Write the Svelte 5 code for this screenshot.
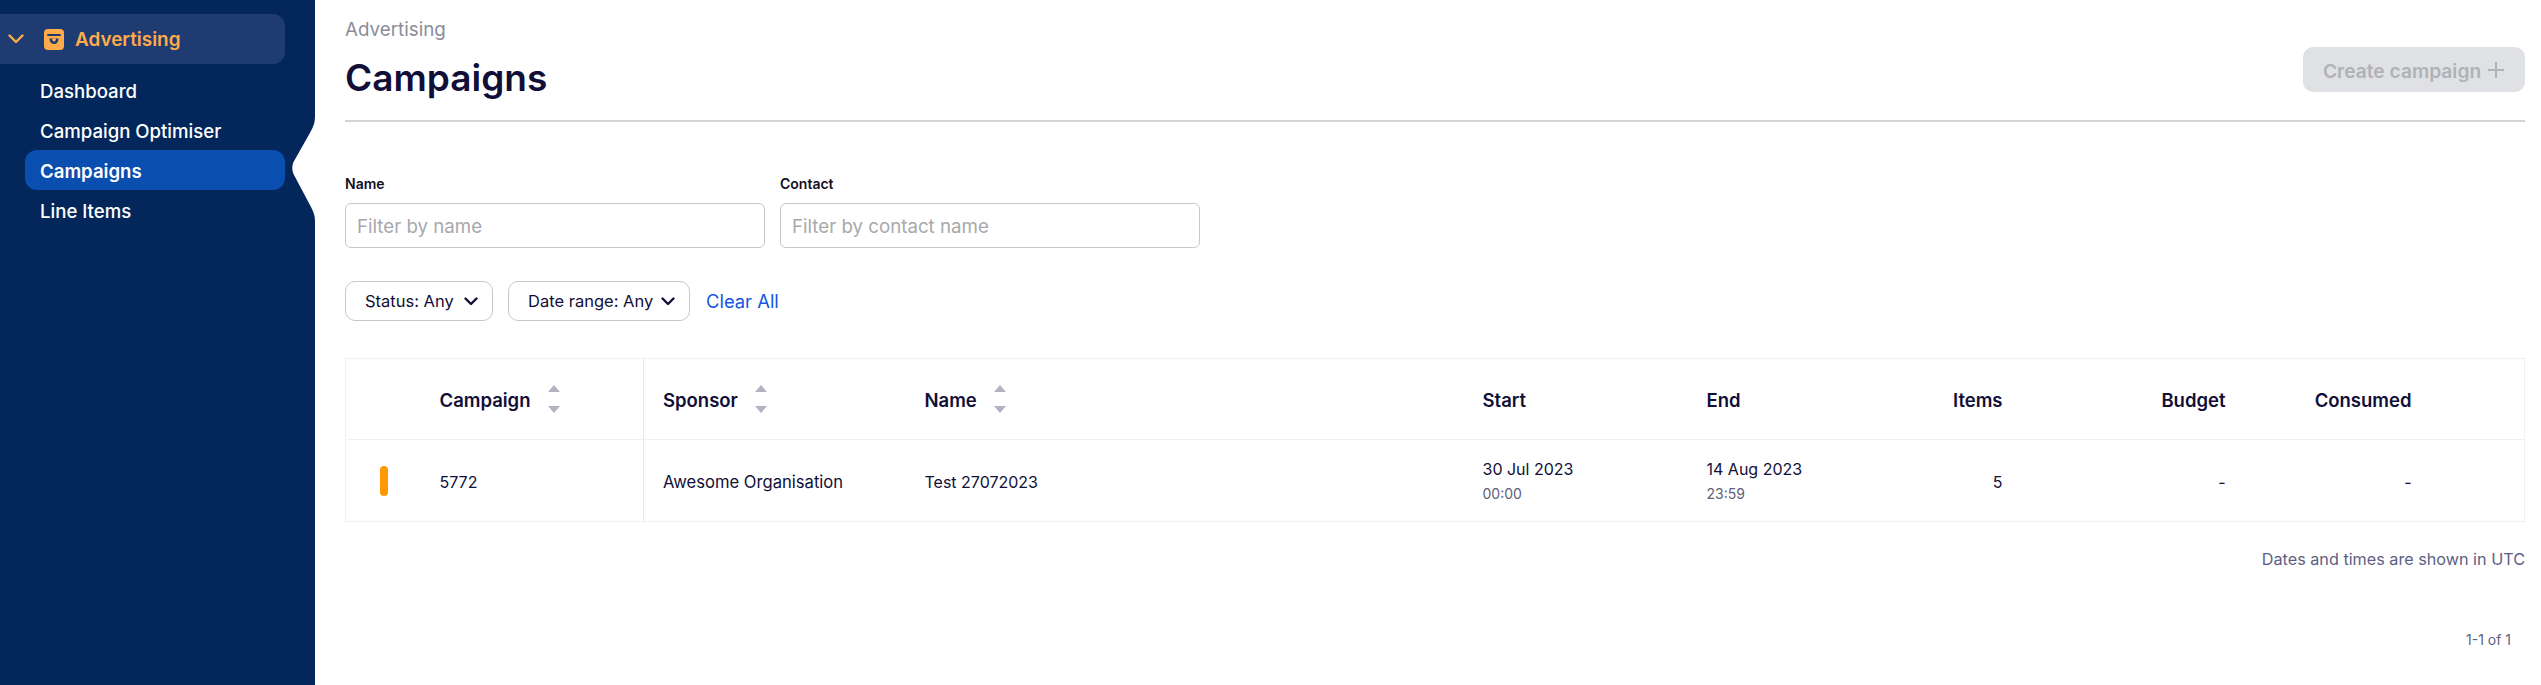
<script>
  const nav = ['Dashboard', 'Campaign Optimiser', 'Campaigns', 'Line Items'];
</script>

<div class="page">
  <aside class="side">
    <div class="group">
      <svg class="chev" width="16" height="10" viewBox="0 0 16 10"><path d="M1.500 1.500 8 8l6.500-6.500" fill="none" stroke="#ffab4a" stroke-width="2.400" stroke-linecap="round" stroke-linejoin="round"/></svg>
      <svg class="bag" width="20" height="21" viewBox="0 0 20 21">
        <rect width="20" height="21" rx="4" fill="#ffab4a"/>
        <path d="M4 6h12" stroke="#1e3c72" stroke-width="2" stroke-linecap="round"/>
        <path d="M5.500 9.500h9c0 3.500-1.800 5.500-4.500 5.500S5.500 13 5.500 9.500Z" fill="#1e3c72"/>
        <path d="M8 9.500c0 2 .8 3 2 3s2-1 2-3Z" fill="#ffab4a"/>
      </svg>
      <span>Advertising</span>
    </div>
    <ul class="items">
      {#each nav as item}
        <li class:active={item === 'Campaigns'}>{item}</li>
      {/each}
    </ul>
    <svg class="notch" width="24" height="104" viewBox="0 0 24 104"><path d="M24 0C24 6 22 10 20 14L2.500 45Q0 51 2.500 57L20 90C22 94 24 98 24 104Z" fill="#fff"/></svg>
  </aside>

  <main class="main">
    <header class="head">
      <div>
        <div class="crumb">Advertising</div>
        <h1>Campaigns</h1>
      </div>
      <button class="create" disabled><span>Create campaign</span>
        <svg width="18" height="18" viewBox="0 0 18 18"><path d="M9 1v16M1 9h16" stroke="#b0b2b5" stroke-width="2"/></svg>
      </button>
    </header>

    <section class="filters">
      <label>Name<input placeholder="Filter by name" /></label>
      <label>Contact<input placeholder="Filter by contact name" /></label>
    </section>

    <section class="selects">
      <div class="sel s1">Status: Any <svg width="14" height="9" viewBox="0 0 14 9"><path d="M1.500 1.500 7 7l5.500-5.500" fill="none" stroke="#110f38" stroke-width="2.400" stroke-linecap="round" stroke-linejoin="round"/></svg></div>
      <div class="sel s2">Date range: Any <svg width="14" height="9" viewBox="0 0 14 9"><path d="M1.500 1.500 7 7l5.500-5.500" fill="none" stroke="#110f38" stroke-width="2.400" stroke-linecap="round" stroke-linejoin="round"/></svg></div>
      <span class="clear">Clear All</span>
    </section>

    <table>
      <colgroup>
        <col style="width:75px"/><col style="width:223px"/><col style="width:262px"/><col style="width:558px"/><col style="width:224px"/><col style="width:213px"/><col style="width:122px"/><col style="width:223px"/><col style="width:186px"/><col />
      </colgroup>
      <thead>
        <tr>
          <th></th>
          <th class="sep"><span class="sort">Campaign <i><b class="up"></b><b class="dn"></b></i></span></th>
          <th><span class="sort">Sponsor <i><b class="up"></b><b class="dn"></b></i></span></th>
          <th><span class="sort">Name <i><b class="up"></b><b class="dn"></b></i></span></th>
          <th>Start</th>
          <th>End</th>
          <th class="r">Items</th>
          <th class="r">Budget</th>
          <th class="r">Consumed</th>
          <th></th>
        </tr>
      </thead>
      <tbody>
        <tr>
          <td class="st"><span class="pill"></span></td>
          <td class="sep">5772</td>
          <td class="wide">Awesome Organisation</td>
          <td>Test 27072023</td>
          <td class="date">30 Jul 2023<small>00:00</small></td>
          <td class="date">14 Aug 2023<small>23:59</small></td>
          <td class="r">5</td>
          <td class="r">-</td>
          <td class="r">-</td>
          <td></td>
        </tr>
      </tbody>
    </table>

    <p class="tz">Dates and times are shown in UTC</p>
    <p class="count">1-1 of 1</p>
  </main>
</div>

<style>
  :global(body) { margin: 0; background: #fff; }
  .page { display: flex; height: 685px; font-family: Inter, "Noto Sans", sans-serif; color: #110f38; overflow: hidden; }
  .side { position: relative; width: 315px; flex: none; background: #03275b; padding-top: 14px; box-sizing: border-box; }
  .group { display: flex; align-items: center; width: 285px; height: 50px; background: #1e3c72; border-radius: 0 12px 12px 0; color: #ffab4a; font-weight: 600; font-size: 18.900px; box-sizing: border-box; padding-left: 8px; }
  .chev { margin-right: 20px; }
  .bag { margin-right: 11px; }
  .items { list-style: none; margin: 6px 0 0 25px; padding: 0; width: 260px; }
  .items li { height: 40px; line-height: 42px; padding-left: 15px; color: #fff; font-size: 18.600px; font-weight: 500; border-radius: 12px; }
  .items li.active { background: #0a4eb0; font-weight: 600; }
  .notch { position: absolute; left: 291px; top: 117px; }

  .main { flex: 1; min-width: 0; padding: 0 16px 0 30px; }
  .head { display: flex; justify-content: space-between; height: 120px; border-bottom: 2px solid #d2d4d7; }
  .crumb { font-size: 18.800px; line-height: 24px; margin-top: 18px; color: #8c8c9a; }
  h1 { margin: 14px 0 0; font-size: 37px; line-height: 44px; font-weight: 600; color: #110f38; }
  .create { margin-top: 47px; width: 222px; height: 45px; border: 0; border-radius: 10px; background: #dfe1e4; color: #b0b2b5; font: 600 19.200px Inter, sans-serif; display: flex; align-items: center; justify-content: center; gap: 6px; padding: 0; }
  .create span { padding-top: 2px; }

  .filters { display: flex; gap: 15px; margin-top: 52px; }
  label { display: flex; flex-direction: column; font-size: 14px; font-weight: 600; line-height: 20px; gap: 9px; color: #110f1f; }
  input { width: 420px; height: 45px; box-sizing: border-box; border: 1.500px solid #c6c8cc; border-radius: 6px; padding: 2px 11px 0; font: 400 18.700px Inter, sans-serif; outline: none; }
  input::placeholder { color: #a8a8ac; opacity: 1; }

  .selects { display: flex; align-items: center; gap: 15px; margin-top: 33px; }
  .sel { display: flex; align-items: center; justify-content: space-between; height: 40px; box-sizing: border-box; border: 1.500px solid #c6c8cc; border-radius: 10px; padding: 0 14px 0 19px; font-size: 16.500px; }
  .s1 { width: 148px; }
  .s2 { width: 182px; }
  .clear { color: #1557e0; font-size: 18.400px; margin-left: 1px; }

  table { width: 2180px; margin-top: 37px; border-collapse: collapse; table-layout: fixed; border: 1.500px solid #f0f0f5; }
  th, td { padding: 2px 20px 0 19px; text-align: left; white-space: nowrap; }
  th { height: 78px; font-weight: 600; font-size: 18.500px; border-bottom: 1.500px solid #f0f0f5; }
  td { height: 79px; font-size: 16px; }
  .wide { font-size: 16.600px; }
  .date { padding-top: 0; }
  .r { text-align: right; }
  .sep { border-right: 1.500px solid #e6e6ef; }
  .st { padding: 0 0 0 34px; }
  .pill { display: block; width: 8px; height: 30px; border-radius: 4px; background: #ff9900; }
  small { display: block; font-size: 14px; color: #60607a; margin-top: 6px; }
  .sort { display: inline-flex; align-items: center; gap: 17px; }
  .sort i { display: flex; flex-direction: column; gap: 14px; margin-top: -2px; }
  .sort b { display: block; width: 0; height: 0; border-left: 6px solid transparent; border-right: 6px solid transparent; }
  .up { border-bottom: 7px solid #b2b2c2; }
  .dn { border-top: 7px solid #b2b2c2; }
  .tz { margin: 26px 0 0; text-align: right; font-size: 16.200px; line-height: 22px; color: #5c5f85; }
  .count { margin: 60px 14px 0 0; text-align: right; font-size: 14px; line-height: 20px; color: #5c5f85; }
</style>
